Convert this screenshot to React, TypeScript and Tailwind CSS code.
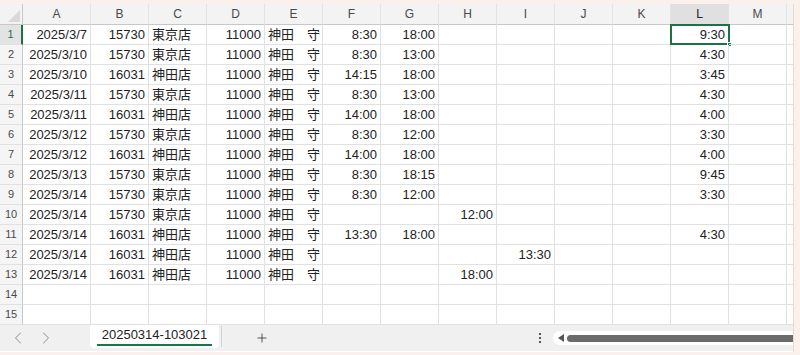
import { ChevronLeft, ChevronRight, Plus } from 'lucide-react';

const cols = ['A', 'B', 'C', 'D', 'E', 'F', 'G', 'H', 'I', 'J', 'K', 'L', 'M'];
const leftAligned = [2, 4];

const kyoto = '東京店';
const kanda = '神田店';
const name = '神田　守';

// A..M per row
const rows: string[][] = [
  ['2025/3/7', '15730', kyoto, '11000', name, '8:30', '18:00', '', '', '', '', '9:30', ''],
  ['2025/3/10', '15730', kyoto, '11000', name, '8:30', '13:00', '', '', '', '', '4:30', ''],
  ['2025/3/10', '16031', kanda, '11000', name, '14:15', '18:00', '', '', '', '', '3:45', ''],
  ['2025/3/11', '15730', kyoto, '11000', name, '8:30', '13:00', '', '', '', '', '4:30', ''],
  ['2025/3/11', '16031', kanda, '11000', name, '14:00', '18:00', '', '', '', '', '4:00', ''],
  ['2025/3/12', '15730', kyoto, '11000', name, '8:30', '12:00', '', '', '', '', '3:30', ''],
  ['2025/3/12', '16031', kanda, '11000', name, '14:00', '18:00', '', '', '', '', '4:00', ''],
  ['2025/3/13', '15730', kyoto, '11000', name, '8:30', '18:15', '', '', '', '', '9:45', ''],
  ['2025/3/14', '15730', kyoto, '11000', name, '8:30', '12:00', '', '', '', '', '3:30', ''],
  ['2025/3/14', '15730', kyoto, '11000', name, '', '', '12:00', '', '', '', '', ''],
  ['2025/3/14', '16031', kanda, '11000', name, '13:30', '18:00', '', '', '', '', '4:30', ''],
  ['2025/3/14', '16031', kanda, '11000', name, '', '', '', '13:30', '', '', '', ''],
  ['2025/3/14', '16031', kanda, '11000', name, '', '', '18:00', '', '', '', '', ''],
  Array(13).fill(''),
  Array(13).fill(''),
];

function Corner() {
  return (
    <div className="h-[21px] border-r border-b border-[#c8c8c8] bg-[#f3f3f3] relative">
      <svg width="23" height="21" className="absolute left-0 top-0">
        <polygon points="20,6 20,18 8,18" fill="#d9d9d9" />
      </svg>
    </div>
  );
}

export default function App() {
  return (
    <div className="w-[800px] h-[355px] bg-[#fbf1ec] pt-[4px] pb-[3px] pr-[6px] font-['Liberation_Sans','Noto_Sans_CJK_JP',sans-serif]">
      <div className="h-full bg-white border-r border-[#f1d6ca] flex flex-col overflow-hidden">
        <div className="grid grid-cols-[23px_68px_repeat(12,58px)_1fr] text-[13px] text-[#222]">
          <Corner />
          {cols.map((c) => (
            <div
              key={c}
              className={`h-[21px] border-r border-b border-[#c8c8c8] border-r-[#e3e3e3] flex items-center justify-center text-[12px] ${
                c === 'L' ? 'bg-[#e0e0e0] text-[#222]' : 'bg-[#f3f3f3] text-[#4a4a4a]'
              }`}
            >
              {c}
            </div>
          ))}
          <div className="h-[21px] border-b border-[#c8c8c8] bg-[#f3f3f3]" />

          {rows.map((r, i) => (
            <div key={i} className="contents">
              <div
                className={`h-[20px] border-b border-[#e1e1e1] flex items-center justify-center text-[11px] ${
                  i === 0
                    ? 'bg-[#e3e3e3] text-[#1e7145] border-r-2 border-r-[#1e7145]'
                    : 'bg-[#f5f5f5] text-[#4a4a4a] border-r border-r-[#c8c8c8]'
                }`}
              >
                {i + 1}
              </div>
              {r.map((v, j) => (
                <div
                  key={j}
                  className={`relative h-[20px] border-r border-b border-[#e1e1e1] flex items-center whitespace-nowrap overflow-visible ${
                    leftAligned.includes(j) ? 'justify-start pl-[3px]' : 'justify-end pr-[3px]'
                  }`}
                >
                  {v}
                  {i === 0 && j === 11 && (
                    <div className="absolute left-[-1px] top-[-1px] right-[-2px] bottom-[-1px] border-2 border-[#1e7145]">
                      <div className="absolute right-[-4px] bottom-[-4px] w-[5px] h-[5px] bg-[#1e7145] border border-white" />
                    </div>
                  )}
                </div>
              ))}
              <div className="h-[20px] border-b border-[#e1e1e1]" />
            </div>
          ))}
        </div>

        <div className="h-[26px] bg-[#f0f0f0] flex items-start">
          <div className="w-[90px] h-[26px] flex items-center">
            <ChevronLeft size={20} strokeWidth={1.2} className="text-[#8c8c8c] ml-[8px]" />
            <ChevronRight size={20} strokeWidth={1.2} className="text-[#8c8c8c] ml-[8px]" />
          </div>
          <div className="w-[129px] h-[23px] bg-white rounded-b-[4px] flex flex-col items-center justify-end">
            <span className="px-[5px] pb-[1px] border-b-2 border-[#107c41] text-[13px] leading-[17px] text-[#222]">
              20250314-103021
            </span>
            <div className="h-[2px]" />
          </div>
          <div className="w-px h-[21px] mt-[1px] ml-[2px] bg-[#d2d2d2]" />
          <div className="w-[80px] h-[26px] flex items-center justify-center">
            <Plus size={14} strokeWidth={1.4} className="text-[#333]" />
          </div>
          <div className="ml-auto h-[26px] flex items-center">
            <svg width="14" height="12" className="mr-[6px]">
              <circle cx="7" cy="2" r="1.1" fill="#333" />
              <circle cx="7" cy="6" r="1.1" fill="#333" />
              <circle cx="7" cy="10" r="1.1" fill="#333" />
            </svg>
            <div className="w-[240px] h-[14px] bg-white rounded-l-full flex items-center pl-[5px]">
              <svg width="6" height="8">
                <polygon points="6,0 6,8 0,4" fill="#555" />
              </svg>
              <div className="ml-[3px] flex-1 h-[7px] bg-[#6b6b6b] rounded-l-full" />
            </div>
          </div>
        </div>
      </div>
    </div>
  );
}
